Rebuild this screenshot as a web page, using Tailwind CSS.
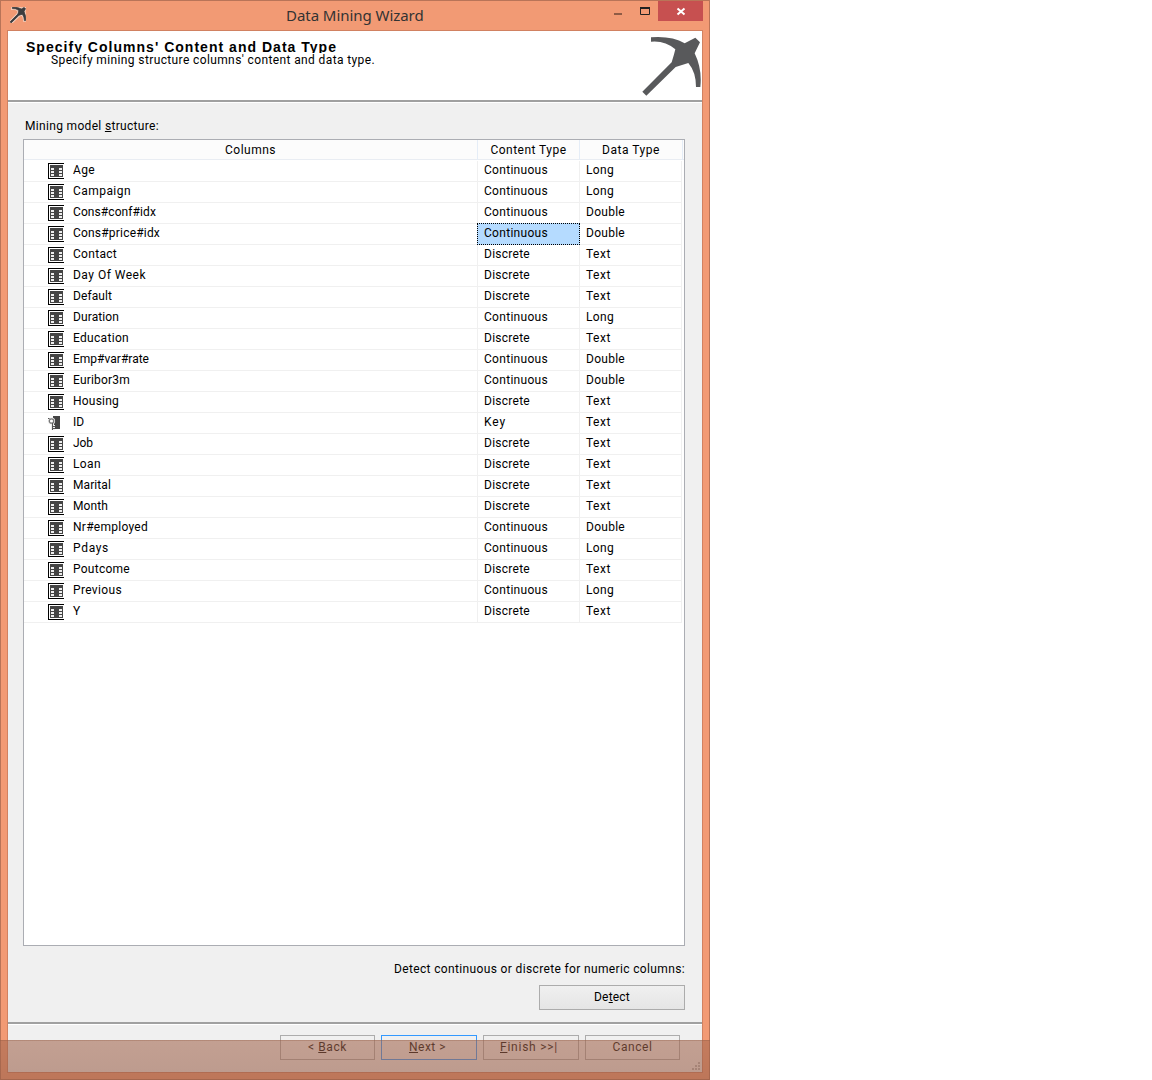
<!DOCTYPE html>
<html lang="en"><head><meta charset="utf-8"><title>Data Mining Wizard</title>
<script src="https://cdn.jsdelivr.net/npm/@tailwindcss/browser@4"></script></head>
<body class="bg-white overflow-hidden">
<svg class="hidden">
<symbol id="pick" viewBox="246 108 180 180"><path d="M247 275L335 187Q342 165 346 148Q315 121 273 125V112Q335 107 374 130L406 113L420 127L404 160Q427 208 421 261H408Q408 216 385 189L347 201L259 287Z"/></symbol>
<symbol id="col" viewBox="0 0 16 16"><g shape-rendering="crispEdges"><path fill="#fff" d="M0 0h16v16H0z"/><path fill="#000" d="M0 0h16v1H1v14h15v1H0z"/><path fill="#444" d="M2 2h13v12H2z"/><path fill="#eee" d="M3 5h3v2H3zM3 8h3v2H3zM3 11h3v2H3zM11 5h3v2h-3zM11 8h3v2h-3zM11 11h3v2h-3z"/></g></symbol>
<symbol id="key" viewBox="0 0 16 16"><path fill="#444" d="M5 1h7v13H5z"/><path fill="#eee" d="M3 8h3v7H3zM6 10h1v5H6z"/><circle cx="3.500" cy="6" r="3.600" fill="#eee"/><circle cx="3.500" cy="6" r="2.200" fill="#fff" stroke="#777" stroke-width="1.300"/><path fill="none" stroke="#555" d="M4.500 8v7M5 11.500h2M5 13.500h2M0 3.500h1.500"/></symbol>
</svg>
<div class="relative w-[710px] h-[1080px] bg-[#f29a74] border border-[#b97458] flex flex-col text-black font-['Roboto',sans-serif] text-[12px] leading-[14px] tracking-[0.4px] whitespace-nowrap">
  <header class="h-[29px] flex justify-between shrink-0">
    <svg class="w-4 h-4 mt-[6px] ml-[9px]" viewBox="246 108 180 180"><use href="#pick" x="246" y="108" width="180" height="180" fill="#f8d5c5" stroke="#f8d5c5" stroke-width="28"/><use href="#pick" x="246" y="108" width="180" height="180" fill="#3c3c3e" stroke="#3c3c3e" stroke-width="9"/></svg>
    <h1 class="ml-[260px] mt-[4px] text-[15px] leading-5 font-['Noto_Sans',sans-serif] tracking-[-0.05px] text-[#333] w-[140px]">Data Mining Wizard</h1>
    <div class="flex ml-auto">
      <svg class="w-[52px] h-5 mr-px" viewBox="0 0 52 20"><path fill="#8f5b45" d="M9 12h8v2H9z"/><path fill="none" stroke="#222" stroke-width="1" d="M35.500 7v6.500h9V7"/><path fill="#222" d="M35 6h10v2H35z"/></svg>
      <div class="w-[45px] h-5 bg-[#c75050] mr-[6px]"><svg class="w-[45px] h-5" viewBox="0 0 45 20"><path d="M19.500 7.500l7 6M26.500 7.500l-7 6" stroke="#fff" stroke-width="2"/></svg></div>
    </div>
  </header>
  <main class="mx-[6px] h-[1043px] w-[696px] border border-[#d18161] bg-[#f0f0f0] flex flex-col shrink-0">
    <section class="h-[69px] bg-white flex justify-between shrink-0">
      <div class="pl-[18px] pt-[8px]">
        <h2 class="h-[14px] font-bold text-[14px] leading-[16px] font-['Liberation_Sans',sans-serif]"><span data-w="311">Specify Columns' Content and Data Type</span></h2>
        <p class="relative ml-[25px] h-[14px] bg-white"><span data-w="324">Specify mining structure columns' content and data type.</span></p>
      </div>
      <svg class="w-[60px] h-[60px] mt-[5px] fill-[#58595b]"><use href="#pick"/></svg>
    </section>
    <div class="h-[3px] bg-[#a0a0a0] border-b border-white shrink-0"></div>
    <section class="h-[919px] pl-[15px] pr-[17px] flex flex-col shrink-0">
      <p class="h-[36px] pt-[16px] pl-[2px]"><span data-w="134">Mining model <u>s</u>tructure:</span></p>
      <div class="h-[807px] w-[662px] border border-[#abadb3] bg-white shrink-0">
        <div class="grid grid-cols-[454px_102px_103px] w-[660px] h-5 text-center leading-5 bg-[#fcfcfc] border-b border-[#e9edf3] mb-px">
          <div class="border-r border-[#e5edf7]"><span data-w="51">Columns</span></div>
          <div class="border-r border-[#e5edf7]"><span data-w="76">Content Type</span></div>
          <div class="border-r border-[#e5edf7]"><span data-w="58">Data Type</span></div>
        </div>
        <div id="rows"></div>
      </div>
      <div class="mt-[16px] self-end"><span data-w="291">Detect continuous or discrete for numeric columns:</span></div>
      <button class="mt-[9px] self-end w-[146px] h-[25px] border border-[#acacac] bg-linear-to-b from-[#f0f0f0] to-[#e5e5e5] tracking-[0.4px] pb-[2px]"><span data-w="36">De<u>t</u>ect</span></button>
    </section>
    <div class="h-[3px] bg-[#a0a0a0] border-b border-white shrink-0"></div>
    <footer class="flex justify-end gap-[6px] pt-[10px] pr-[22px]">
      <button class="w-[95px] h-[25px] border border-[#acacac] tracking-[0.4px] pb-[2px]"><span data-w="39">&lt; <u>B</u>ack</span></button>
      <button class="w-[96px] h-[25px] border border-[#3399ff] tracking-[0.4px] pb-[2px] pr-[3px]"><span data-w="37"><u>N</u>ext &gt;</span></button>
      <button class="w-[96px] h-[25px] border border-[#acacac] tracking-[0.4px] pb-[2px] pr-[4px]"><span data-w="58"><u>F</u>inish &gt;&gt;|</span></button>
      <button class="w-[95px] h-[25px] border border-[#acacac] tracking-[0.4px] pb-[2px]"><span data-w="40">Cancel</span></button>
    </footer>
  </main>
  <svg class="absolute left-[691px] top-[1061px] w-[9px] h-[9px] fill-[#b4b4b4]" viewBox="0 0 9 9"><path d="M6 0h2v2H6zM6 3h2v2H6zM3 3h2v2H3zM0 6h2v2H0zM3 6h2v2H3zM6 6h2v2H6z"/></svg>
  <div class="absolute -left-px top-[1039px] w-[710px] h-[40px] bg-linear-to-b from-[rgb(162,101,77)]/58 to-[rgb(150,92,70)]/58 border-t border-[#9e6449]/30"></div>
</div>
<script>
const C='Continuous',D='Discrete';
const rows=[['Age',C,'Long',22],['Campaign',C,'Long',58],['Cons#conf#idx',C,'Double',83],['Cons#price#idx',C,'Double',87],['Contact',D,'Text',44],['Day Of Week',D,'Text',73],['Default',D,'Text',39],['Duration',C,'Long',46],['Education',D,'Text',56],['Emp#var#rate',C,'Double',76],['Euribor3m',C,'Double',57],['Housing',D,'Text',46],['ID','Key','Text',11],['Job',D,'Text',20],['Loan',D,'Text',28],['Marital',D,'Text',38],['Month',D,'Text',35],['Nr#employed',C,'Double',75],['Pdays',C,'Long',36],['Poutcome',D,'Text',57],['Previous',C,'Long',49],['Y',D,'Text',8]];
const W={Continuous:64,Discrete:46,Key:22,Long:28,Double:39,Text:25};
document.getElementById('rows').innerHTML=rows.map((r,i)=>`<div class="grid grid-cols-[454px_102px_102px] w-[658px] h-[21px] leading-[18px] border-b border-[#f0f0f0]">
<div class="flex border-r border-[#f0f0f0] pl-6"><svg class="w-4 h-4 mt-[2px] mr-[9px]"><use href="#${i===12?'key':'col'}"/></svg><span data-w="${r[3]}">${r[0]}</span></div>
<div class="${i===3?'h-[22px] w-[103px] -mt-px -ml-px pl-[6px] bg-[#b5dbff] border border-dotted border-black relative':'pl-[6px] border-r border-[#f0f0f0]'}"><span data-w="${W[r[1]]}">${r[1]}</span></div>
<div class="pl-[6px] border-r border-[#f0f0f0]"><span data-w="${W[r[2]]}">${r[2]}</span></div></div>`).join('');
// Fit each label to its nominal width by tracking, once styles and fonts are ready
function fit(){
 document.querySelectorAll('span[data-w]').forEach(s=>{
  const n=s.textContent.length;if(n<2)return;
  s.style.letterSpacing='0px';
  s.style.letterSpacing=((+s.dataset.w-s.getBoundingClientRect().width)/n)+'px';
 });
}
addEventListener('load',()=>{fit();document.fonts.ready.then(fit);requestAnimationFrame(fit);setTimeout(fit,50);});
</script>
</body></html>
